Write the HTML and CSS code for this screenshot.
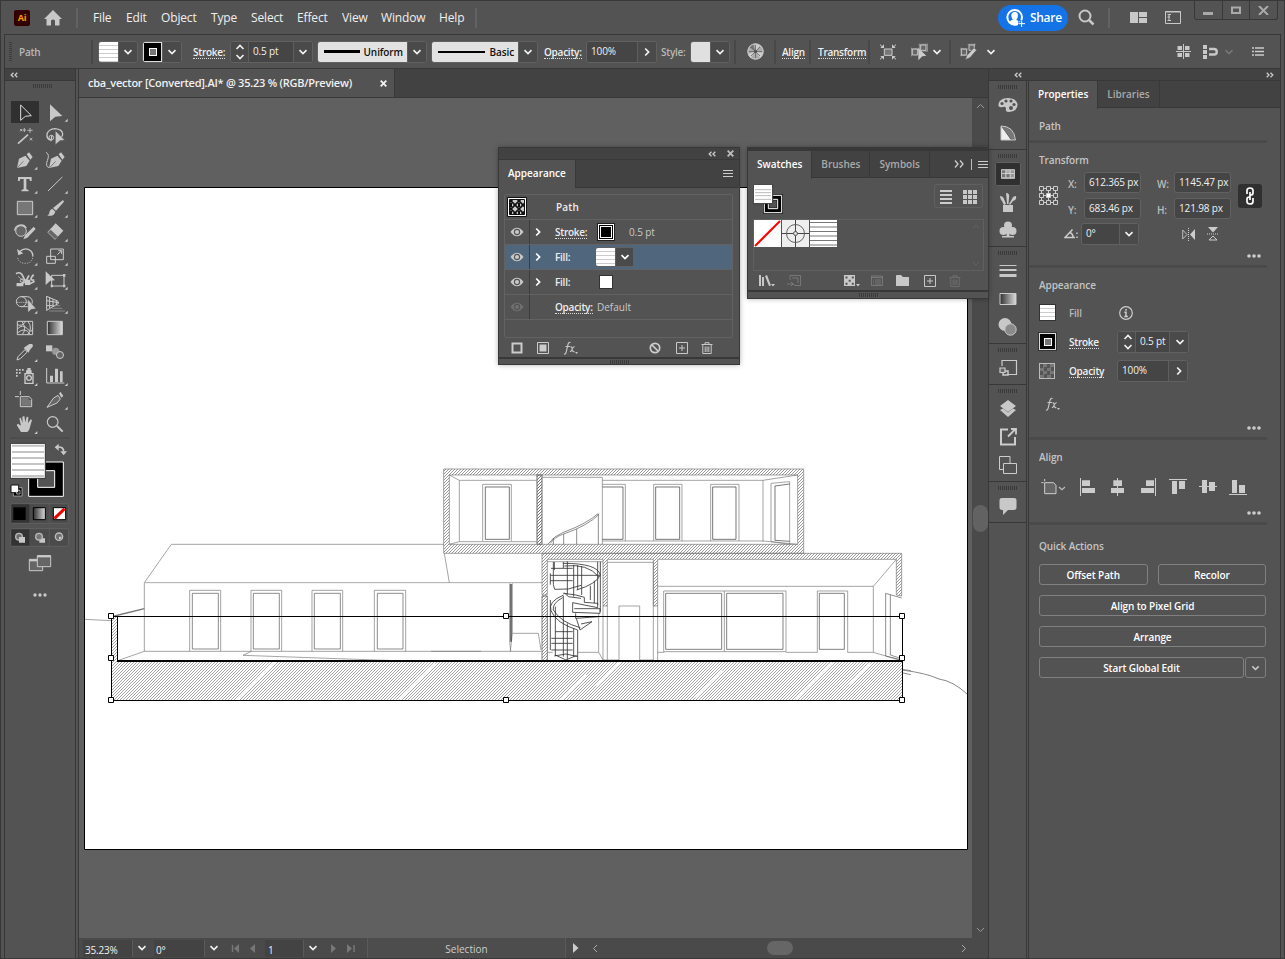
FILE: index.html
```html
<!DOCTYPE html>
<html lang="en">
<head>
<meta charset="utf-8">
<title>cba_vector [Converted].AI</title>
<link rel="stylesheet" href="styles.css">
</head>
<body>
<svg class="defs" width="0" height="0">
  <symbol id="down" viewBox="0 0 10 6"><path d="M1.5 1.2L5 4.6L8.5 1.2" fill="none" stroke="currentColor" stroke-width="1.7"/></symbol>
  <symbol id="right" viewBox="0 0 6 10"><path d="M1.2 1.5L4.6 5L1.2 8.5" fill="none" stroke="currentColor" stroke-width="1.7"/></symbol>
  <symbol id="updown" viewBox="0 0 10 16"><path d="M1.5 5L5 1.5L8.5 5M1.5 11L5 14.5L8.5 11" fill="none" stroke="currentColor" stroke-width="1.6"/></symbol>
  <symbol id="collapse" viewBox="0 0 8 6"><path d="M3.5 .8L1.2 3L3.5 5.2M7.3 .8L5 3L7.3 5.2" fill="none" stroke="currentColor" stroke-width="1.3"/></symbol>
  <symbol id="expand" viewBox="0 0 8 6"><path d="M.7 .8L3 3L.7 5.2M4.5 .8L6.8 3L4.5 5.2" fill="none" stroke="currentColor" stroke-width="1.3"/></symbol>
  <symbol id="dots" viewBox="0 0 14 4"><circle cx="2" cy="2" r="1.8" fill="currentColor"/><circle cx="7" cy="2" r="1.8" fill="currentColor"/><circle cx="12" cy="2" r="1.8" fill="currentColor"/></symbol>
  <symbol id="eye" viewBox="0 0 14 10"><path d="M.5 5Q3.500 .8 7 .8T13.500 5Q10.500 9.200 7 9.200T.5 5Z" fill="currentColor"/><circle cx="7" cy="5" r="2.600" fill="none" stroke="#535353" stroke-width="1.100"/></symbol>
  <symbol id="fx" viewBox="0 0 15 14"><path d="M1 13Q2.500 13.500 3.200 11L5 3.500Q5.500 1 7.500 1.500M2.500 5.500H7M7.500 6Q8.700 5.500 9 7L9.800 10Q10.200 11 11.400 10.400M11.700 5.800Q10.500 5.500 9.500 7.500L8.500 9.500Q8 10.700 6.900 10.400" fill="none" stroke="currentColor" stroke-width="1.100"/><path d="M12 11h3l-1.500 2z" fill="currentColor"/></symbol>
  <symbol id="trash" viewBox="0 0 12 12"><path d="M.5 2.500H11.500M4 2.500V.7H8V2.500M1.800 3V11.500H10.200V3M4.200 4.500V10M6 4.500V10M7.800 4.500V10" fill="none" stroke="currentColor"/></symbol>
  <symbol id="plus" viewBox="0 0 12 12"><path d="M.5 .5H11.500V11.500H.5ZM6 3V9M3 6H9" fill="none" stroke="currentColor"/></symbol>
  <symbol id="lines" viewBox="0 0 10 7"><path d="M0 .5H10M0 3.500H10M0 6.500H10" stroke="currentColor"/></symbol>
</svg>

<div class="window">
  <header class="titlebar">
    <span class="ai">Ai</span>
    <svg class="g" width="18" height="16" viewBox="0 0 18 16"><path d="M9 0L18 9H15.500V15.500H11V10.500Q9 8.300 7 10.500V15.500H2.500V9H0Z"/></svg>
    <i class="sep tall"></i>
    <span>File</span><span>Edit</span><span>Object</span><span>Type</span><span>Select</span><span>Effect</span><span>View</span><span>Window</span><span>Help</span>
    <i class="sep tall"></i>
    <button class="share"><svg width="19" height="18" viewBox="438 24 57 54"><circle cx="464" cy="49" r="22" fill="none" stroke="#fff" stroke-width="6"/><path d="M448 66Q450 57 459 56Q453 49 454 40Q457 32 465 32Q474 34 474 43Q474 51 469 56L475 60V72Q460 76 448 66Z" fill="#fff"/><path d="M485 57V79M474 68H496" stroke="#1473e6" stroke-width="9"/><path d="M485 58V78M475 68H495" stroke="#fff" stroke-width="3"/></svg>Share</button>
    <svg width="17" height="17" viewBox="0 0 17 17" fill="none" stroke="#c8c8c8"><circle cx="7" cy="7" r="5.500" stroke-width="2"/><path d="M11 11L15.500 15.500" stroke-width="2.500"/></svg>
    <i class="sep tall"></i>
    <svg class="g" width="17" height="11" viewBox="0 0 17 11"><path d="M0 0H8V11H0ZM9 0H17V5H9ZM9 6H17V11H9Z"/></svg>
    <svg width="16" height="13" viewBox="0 0 16 13"><path d="M.5 .5H15.500V12.500H.5Z" fill="none" stroke="#c8c8c8"/><path d="M.5 1H15.500M4 3V10M2.500 3.500H6M2.500 9.500H6M2.500 6H5" stroke="#c8c8c8"/></svg>
    <div class="winbtns"><i><svg width="10" height="10"><path d="M0 8.500H10" stroke="#aaa" stroke-width="3"/></svg></i><i><svg width="10" height="8"><path d="M1 1.500H9V7H1Z" fill="none" stroke="#aaa" stroke-width="2"/></svg></i><i><svg width="11" height="9"><path d="M1 0L10 9M10 0L1 9" stroke="#aaa" stroke-width="2"/></svg></i></div>
  </header>

  <div class="control">
    <i class="vgrip"></i><b class="dim">Path</b><i class="sep"></i>
    <div class="combo"><i class="stripes s19"></i><em><svg width="10" height="6"><use href="#down"/></svg></em></div>
    <div class="combo"><i class="strokesw"></i><em><svg width="10" height="6"><use href="#down"/></svg></em></div>
    <b><u>Stroke:</u></b>
    <div class="combo"><em class="spin"><svg width="10" height="16"><use href="#updown"/></svg></em><span class="val v44">0.5 pt</span><em><svg width="10" height="6"><use href="#down"/></svg></em></div>
    <div class="combo"><span class="profile w90"><hr class="h3">Uniform</span><em><svg width="10" height="6"><use href="#down"/></svg></em></div>
    <div class="combo"><span class="profile w86"><hr class="h2">Basic</span><em><svg width="10" height="6"><use href="#down"/></svg></em></div>
    <b><u>Opacity:</u></b>
    <div class="combo"><span class="val v50">100%</span><em><svg width="6" height="10"><use href="#right"/></svg></em></div>
    <b class="dim">Style:</b>
    <div class="combo"><i class="blank"></i><em><svg width="10" height="6"><use href="#down"/></svg></em></div>
    <i class="sep"></i>
    <svg width="17" height="17" viewBox="0 0 17 17"><circle cx="8.500" cy="8.500" r="8" fill="#aaa"/><path d="M8.500 8.500L8 1A8 8 0 0 1 13 2.500ZM8.500 8.500L16 10A8 8 0 0 1 13 15ZM8.500 8.500L4 15A8 8 0 0 1 1 11Z" fill="#ccc"/><path d="M8.500 8.500L2 4A8 8 0 0 1 6 1Z" fill="#777"/><path d="M8.500 8.500V2M8.500 8.500V15M2 8.500H15M4 4L13 13M13 4L4 13" stroke="#666" stroke-width=".8"/><circle cx="8.500" cy="8.500" r="7.700" fill="none" stroke="#c8c8c8"/><circle cx="8.500" cy="8.500" r="1.700" fill="#555"/></svg>
    <i class="sep"></i><b><u>Align</u></b><i class="sep"></i><b><u>Transform</u></b><i class="sep"></i>
    <svg width="18" height="18" viewBox="57 126 54 54"><path d="M73 144H96V163H73Z" fill="#777" stroke="#ccc" stroke-width="3"/><path d="M60 131L70 140M108 131L98 140M60 175L70 166M108 175L98 166" stroke="#ccc" stroke-width="3"/><path d="M61 141H72V130ZM107 141H96V130ZM61 165H72V176ZM107 165H96V176Z" fill="#ccc"/></svg>
    <div class="pair"><svg width="17" height="18" viewBox="152 126 51 54"><path d="M181 132H197V148H181ZM156 144H172V162H156Z" fill="#666" stroke="#c8c8c8" stroke-width="3"/><path d="M177 128V152M201 128V152M153 140V166M175 142V150M178 130H201M178 150H201M153 144H178" stroke="#bbb" stroke-width="2"/><path d="M174 142L198 164L186 166L174 178Z" fill="#ccc"/></svg><svg class="ml" width="10" height="6"><use href="#down"/></svg></div>
    <i class="sep"></i>
    <div class="pair"><svg width="17" height="18" viewBox="300 126 51 54"><path d="M327 132H343V148H327ZM304 144H320V162H304Z" fill="#666" stroke="#c8c8c8" stroke-width="3"/><path d="M323 130H347M301 144H323M301 163H323M304 140V166M343 128V152" stroke="#bbb" stroke-width="2"/><path d="M342 140L350 147L330 170L316 176L320 164Z" fill="#ccc" stroke="#535353" stroke-width="2"/></svg><svg class="ml2" width="10" height="6"><use href="#down"/></svg></div>
    <svg class="g" width="15" height="15" viewBox="0 0 15 15"><path d="M1.500 2H6V6H1.500ZM9 2H13.500V6H9ZM1.500 9H6V13H1.500ZM9 9H13.500V13H9ZM7 0H8V15H7ZM0 7H15V8H0Z"/></svg>
    <div class="pair off"><svg class="g" width="15" height="14" viewBox="0 0 15 14"><path d="M0 0H4V4H0ZM0 5H4V9H0ZM0 10H4V14H0Z"/><path d="M6 4H11A2.500 2.500 0 0 1 11 9.500H6" fill="none" stroke="#c8c8c8" stroke-width="2.400"/></svg><svg class="ml" width="10" height="6"><use href="#down"/></svg></div>
    <svg width="12" height="9"><path d="M3 1H12M3 4.500H12M3 8H12" stroke="#ccc" stroke-width="1.300"/><path d="M0 1H2M0 4.500H2M0 8H2" stroke="#ccc" stroke-width="1.500"/></svg>
  </div>

  <main class="work">
    <aside class="tools">
      <div class="bar"><svg width="8" height="6"><use href="#collapse"/></svg></div>
      <i class="grip"></i>
      <div class="toolgrid">
        <svg class="on" viewBox="30 96 90 72"><path d="M62 111L94 143L76 145L62 157Z" fill="none" stroke="#ddd" stroke-width="3"/></svg>
        <svg viewBox="120 96 90 72"><path d="M150 109L187 144L166 146L150 160ZM203 152V161H194Z"/></svg>
        <svg viewBox="30 168 90 72"><path d="M54 227L84 200" stroke="#c8c8c8" stroke-width="5"/><path d="M60 190L67 183M60 183L67 190M82 187H98M90 180V195M89 210L97 217M97 210L89 217M73 180V192M68 186H78" stroke="#c8c8c8" stroke-width="2.500"/></svg>
        <svg viewBox="120 168 90 72"><path d="M152 220Q156 210 155 202M155 217Q139 214 141 198Q146 183 165 182Q187 184 188 198Q188 204 184 207" fill="none" stroke="#c8c8c8" stroke-width="4"/><circle cx="154" cy="209" r="7" fill="none" stroke="#c8c8c8" stroke-width="3"/><path d="M166 188L194 216L180 218L166 230Z" stroke="#535353" stroke-width="1.500"/></svg>
        <svg viewBox="30 240 90 72"><path d="M51 300L57 272L76 263L89 278L79 294ZM80 259L87 253L98 267L91 275ZM112 296V305H103Z"/><path d="M52 299L70 280" stroke="#535353" stroke-width="2"/></svg>
        <svg viewBox="120 240 90 72"><path d="M147 300L153 272L172 263L185 278L175 294ZM176 259L183 253L194 267L187 275Z"/><path d="M149 299L167 280" stroke="#535353" stroke-width="2"/><path d="M138 253Q150 259 142 278Q135 296 148 299" fill="none" stroke="#c8c8c8" stroke-width="3"/></svg>
        <svg viewBox="30 312 90 72"><path d="M54 327H95V339H90L88 333H79V363L86 367V370H64V367L71 363V333H61L59 339H54ZM112 368V377H103Z"/></svg>
        <svg viewBox="120 312 90 72"><path d="M144 369L187 327" stroke="#c8c8c8" stroke-width="3"/><path d="M203 368V377H194Z"/></svg>
        <svg viewBox="30 384 90 72"><path d="M52 400H98V440H52Z" fill="#777" stroke="#ccc" stroke-width="3"/><path d="M112 440V449H103Z"/></svg>
        <svg viewBox="120 384 90 72"><path d="M189 396L192 401L168 428L159 420ZM157 422L166 431Q162 446 142 443Q149 438 149 430Q151 424 157 422ZM203 440V449H194Z"/></svg>
        <svg viewBox="30 456 90 72"><circle cx="63" cy="489" r="16" fill="#666" stroke="#c8c8c8" stroke-width="3"/><path d="M44 488A19 19 0 0 1 79 480" fill="none" stroke="#c8c8c8" stroke-width="4"/><path d="M101 476L107 483L82 509L70 514L75 502ZM112 512V521H103Z"/></svg>
        <svg viewBox="120 456 90 72"><path d="M167 466L190 488L165 515L142 493ZM203 512V521H194Z"/><path d="M152 485L174 506L165 513L144 493Z" fill="#666"/></svg>
        <svg viewBox="30 528 90 72"><path d="M58 551Q76 536 92 548Q100 556 98 566" fill="none" stroke="#c8c8c8" stroke-width="4"/><path d="M98 570Q94 586 76 586Q57 586 53 570" fill="none" stroke="#c8c8c8" stroke-width="3" stroke-dasharray="3 4"/><path d="M51 543L55 562L70 556ZM112 584V593H103Z"/></svg>
        <svg viewBox="120 528 90 72"><path d="M140 565H166V586H140ZM152 543H190V575H152Z" fill="none" stroke="#ccc" stroke-width="3"/><path d="M172 560L184 549M175 548H185V558" fill="none" stroke="#ccc" stroke-width="3"/><path d="M203 584V593H194Z"/></svg>
        <svg viewBox="30 600 90 72"><path d="M48 617Q62 609 69 625L78 645Q82 653 104 640M50 650Q75 651 87 622M101 620Q84 639 103 636" fill="none" stroke="#c8c8c8" stroke-width="5"/><circle cx="66" cy="638" r="5" fill="#535353" stroke="#ccc" stroke-width="3"/><path d="M54 625L84 650" stroke="#ccc" stroke-width="2"/><path d="M50 645H70V655H50ZM75 635H91V651H75ZM112 656V665H103Z"/></svg>
        <svg viewBox="120 600 90 72"><path d="M155 622H192V654H155Z" fill="none" stroke="#ccc" stroke-width="3"/><path d="M137 610L165 637L151 638L137 651ZM189 618H196V626H189ZM189 650H196V658H189ZM152 650H159V658H152ZM203 656V665H194Z"/></svg>
        <svg viewBox="30 672 90 72"><circle cx="64" cy="701" r="15" fill="none" stroke="#ccc" stroke-width="3"/><path d="M64 686H82A15 15 0 0 1 82 716H64" fill="none" stroke="#ccc" stroke-width="3"/><path d="M52 703H93" stroke="#ccc" stroke-width="3" stroke-dasharray="3 3"/><path d="M83 694L108 722L94 724L84 733Z" stroke="#535353"/><path d="M112 728V737H103Z"/></svg>
        <svg viewBox="120 672 90 72"><path d="M140 684V728M140 685L175 700M140 698L177 704M140 713H168M149 689V720M159 693V715M169 697V712M140 727L176 706" fill="none" stroke="#ccc" stroke-width="3"/><path d="M163 713H180M155 721H187M148 729H195" stroke="#888" stroke-width="3"/><path d="M203 728V737H194Z"/></svg>
        <svg viewBox="30 744 90 72"><path d="M52 760H98V800H52ZM66 760Q82 785 66 800M84 760Q99 780 83 800M52 783Q68 766 82 782T98 781M52 770Q67 777 77 760M52 795Q76 774 91 800" fill="none" stroke="#ccc" stroke-width="3"/></svg>
        <svg viewBox="120 744 90 72"><defs><linearGradient id="gr"><stop offset="0" stop-color="#303030"/><stop offset="1" stop-color="#ddd"/></linearGradient></defs><path d="M142 760H187V800H142Z" fill="url(#gr)" stroke="#ccc" stroke-width="3"/></svg>
        <svg viewBox="30 15 90 72"><path d="M51 75L54 65L75 44L82 51L61 71Z" fill="none" stroke="#ccc" stroke-width="3"/><path d="M71 39L78 34L88 27H97L99 34L89 46L86 53ZM112 72V81H103Z"/></svg>
        <svg viewBox="120 15 90 72"><path d="M138 31H157V49H138Z"/><circle cx="167" cy="49" r="11" fill="#999"/><circle cx="180" cy="60" r="10.500" fill="#666" stroke="#ccc" stroke-width="3"/></svg>
        <svg viewBox="30 87 90 72"><path d="M75 116H99V145H75Z" fill="none" stroke="#ccc" stroke-width="4"/><circle cx="87" cy="129" r="7" fill="none" stroke="#ccc" stroke-width="4"/><path d="M78 106H95V115H78ZM82 99H92V106H82ZM48 102H53V107H48ZM57 102H62V107H57ZM66 102H71V107H66ZM48 111H53V116H48ZM57 111H62V116H57ZM48 120H53V125H48ZM112 144V153H103Z"/></svg>
        <svg viewBox="120 87 90 72"><path d="M140 99V144H193" fill="none" stroke="#ccc" stroke-width="3"/><path d="M150 122H159V141H150ZM165 101H174V141H165ZM180 109H188V141H180ZM203 144V153H194Z"/></svg>
        <svg viewBox="30 159 90 72"><path d="M61 185H88L95 193V215H61ZM45 185H57M61 168V180" fill="none" stroke="#ccc" stroke-width="3"/><path d="M64 188H86V195H93V212H64Z" fill="#777"/></svg>
        <svg viewBox="120 159 90 72"><path d="M141 217L161 189L174 181L181 192L171 204Z" fill="#666" stroke="#ccc" stroke-width="3"/><path d="M177 175L182 171L190 183L184 188ZM203 215V224H194Z"/></svg>
        <svg viewBox="30 231 90 72"><path d="M63 291L50 270L54 266L63 272L58 250L62 248L68 264L67 245L73 243L76 262L80 245L85 246L84 265L92 253L96 255L90 276Q88 288 82 291ZM112 288V297H103Z"/></svg>
        <svg viewBox="120 231 90 72"><circle cx="158" cy="261" r="16" fill="none" stroke="#c8c8c8" stroke-width="3.500"/><path d="M171 273L188 290" stroke="#c8c8c8" stroke-width="6"/></svg>
      </div>
      <svg class="colors" width="60" height="174" viewBox="30 303 180 522">
        <path d="M30 309H210" stroke="#484848" stroke-width="3"/>
        <path d="M86 381H190V484H86Z" fill="#000" stroke="#fff" stroke-width="3"/><path d="M113 407H164V457H113Z" fill="#535353" stroke="#fff" stroke-width="3"/>
        <path d="M31 325H136V430H31Z" fill="#fff" stroke="#333" stroke-width="3"/><path d="M36 332H132M36 351H132M36 369H132M36 387H132M36 405H132M36 423H132" stroke="#c4c4c4" stroke-width="6"/>
        <path d="M174 336Q191 335 191 350" fill="none" stroke="#c8c8c8" stroke-width="5"/><path d="M164 337L176 326V347ZM181 349H201L191 361Z" fill="#c8c8c8"/>
        <path d="M40 458H66V483H40Z" fill="#000" stroke="#ccc" stroke-width="2"/><path d="M33 450H56V473H33Z" fill="#fff" stroke="#111" stroke-width="3"/><path d="M50 466H60V477H50Z" fill="none" stroke="#eee" stroke-width="2"/>
        <rect x="32" y="506" width="174" height="59" rx="6" fill="#4b4b4b" stroke="#606060" stroke-width="3"/><path d="M34 508H88V563H34Z" fill="#333"/><path d="M40 517H77V555H40Z" fill="#000"/><path d="M100 518H136V554H100Z" fill="url(#gr)" stroke="#000" stroke-width="3"/><path d="M160 518H197V554H160Z" fill="#fff" stroke="#000" stroke-width="3"/><path d="M163 551L194 521" stroke="#e00" stroke-width="9"/><path d="M148 506V564" stroke="#606060" stroke-width="2"/>
        <rect x="32" y="581" width="174" height="53" rx="6" fill="#4b4b4b" stroke="#606060" stroke-width="3"/><path d="M34 583H88V632H34Z" fill="#333"/><path d="M148 581V633" stroke="#606060" stroke-width="2"/>
        <g fill="#6e6e6e" stroke="#bbb" stroke-width="4"><circle cx="57" cy="605" r="10"/><circle cx="177" cy="605" r="11"/></g><path d="M57 606H75V623H57ZM118 610H135V623H118ZM177 605H185A8 8 0 0 1 177 613Z" fill="#c8c8c8"/><circle cx="117" cy="605" r="10" fill="#777" stroke="#bbb" stroke-width="4"/>
        <path d="M88 673H128V707H88Z" fill="#666" stroke="#c8c8c8" stroke-width="3"/><path d="M88 676H125" stroke="#ccc" stroke-width="6"/><path d="M112 662H152V695H112Z" fill="#666" stroke="#c8c8c8" stroke-width="3"/><path d="M112 664H152" stroke="#ccc" stroke-width="6"/>
        <g fill="#c8c8c8"><circle cx="105" cy="780" r="5"/><circle cx="120" cy="780" r="5"/><circle cx="135" cy="780" r="5"/></g>
      </svg>
    </aside>

    <section class="document">
      <div class="doctabs"><div class="doctab"><b>cba_vector [Converted].AI* @ 35.23 % (RGB/Preview)</b><svg width="7" height="7"><path d="M.7 .7L6.300 6.300M6.300 .7L.7 6.300" stroke="#eee" stroke-width="1.900"/></svg></div></div>
      <div class="view">
        <svg class="canvas" width="893" height="840" viewBox="78 98 893 840">
          <defs>
            <pattern id="hatch" width="3" height="3" patternUnits="userSpaceOnUse"><path d="M-1 1L1 -1M0 3L3 0M2 4L4 2" stroke="#777" stroke-width=".65"/></pattern>
            <pattern id="hatch3" width="9" height="9" patternUnits="userSpaceOnUse"><path d="M-2 2L2 -2M0 9L9 0M7 11L11 7" stroke="#666" stroke-width="2"/></pattern>
          </defs>
          <path d="M83.500 187.500H966.500V849.500H83.500Z" fill="#fff" stroke="#000"/>
          <g transform="translate(80 535) scale(.33333)" fill="none" stroke="#777" stroke-width="2">
            <path d="M1089 28H271L190 143V349H1200M190 349L110 377M12 253L90 257"/>
            <path d="M190 143H1383" stroke="#aaa" stroke-width="3"/>
            <path d="M100 243L190 221" stroke="#777" stroke-width="4"/>
            <path d="M326 349V166H419V349M510 349V166H602V349M693 349V166H785V349M880 349V166H974V349"/>
            <path d="M334 175H412V342H334ZM517 175H595V342H517ZM700 175H778V342H700ZM889 175H966V342H889Z" stroke="#555"/>
            <path d="M511 349L486 361L970 378" stroke-width="2"/>
          </g>
          <g transform="translate(430 460) scale(.33333)" fill="none" stroke="#777" stroke-width="2">
            <path d="M38 27H1118V280H38ZM55 45V253H1100V45ZM318 45H333V253H318Z" fill="url(#hatch3)" fill-rule="evenodd"/>
            <path d="M318 45H333V253H318Z" fill="url(#hatch3)"/>
            <path d="M333 280H1412V408L1396 405V298H680V438H667V298H529V438H516V298H349V405H333Z" fill="url(#hatch3)"/>
            <path d="M333 408H349V602H333Z" fill="url(#hatch3)" stroke="#444"/>
            <path d="M55 45L85 61H317M85 61V245L55 253M85 245H317M155 243V73H241V243M333 52H514V253M514 73H583V243M668 243V73H753V243M839 243V73H924V243M514 61H996V245M514 243H996L1100 253M996 61L1100 45M1020 245V70L1076 65V253M1020 245L1076 253"/>
            <path d="M163 81H235V238H163ZM514 81H576V238H514M674 81H746V238H674ZM845 81H915V238H845ZM1076 72L1032 78V241L1076 244" stroke="#333"/>
            <path d="M358 250Q370 232 395 223Q470 198 505 162M350 253Q370 227 395 218Q470 190 502 160M367 234V253M398 222V253M437 207V253M502 162V253" stroke="#555"/>
            <path d="M0 574H330M40 280L55 368M236 370V545L239 574M244 370V520L238 574M244 520H322L330 570"/><path d="M240 372V545" stroke="#333" stroke-width="4"/>
            <path d="M349 305H516M349 577H365M440 577H503L516 600H564V438H626V600H667M503 460V577M667 438V600M680 438V602M516 438V602M529 438V600M529 307H667V438M680 379H1327V577H1250M1327 379L1396 298M1327 577L1412 602M680 577H700M1065 577H1159M1159 577V393H1250V577M698 575V393H1065V575H698M880 393V575"/>
            <path d="M704 400H872V568H704ZM887 400H1056V568H887ZM1165 400H1240V568H1165Z" stroke="#444"/>
            <path d="M1412 414L1364 400V588L1412 600M1378 405V585L1412 596M1412 628L1440 632M1412 638L1440 644" stroke="#555"/>
            <g stroke="#333" stroke-width="2.500">
              <path d="M397 310Q500 310 508 345Q496 372 437 390M400 318Q470 310 503 350M360 325H425M358 346H506M358 362H425M370 306V330M367 374L371 388L412 387L450 376M397 306V324M409 304V404M428 315V410M440 315V390M452 318V405M358 340V374M367 306V374M478 377V420M490 362V430M500 305V435M508 305V455"/>
              <path d="M398 405Q350 425 360 452Q375 490 440 510M395 413Q363 430 367 450Q390 488 448 503M358 420V570M373 440V588M397 408V590M409 490V598M428 505V590M440 510V602M361 535H425M361 550H425M361 570H425M370 588L405 582L440 590M373 585L405 600L437 586M373 515H425"/>
              <path d="M397 400L435 405L460 412V427L500 430V443L425 428V457L507 460M434 460V475L504 470M430 446H507V460M436 475L447 510L483 485L450 492M400 398L412 410L450 415"/>
            </g>
          </g>
          <path d="M901 670Q925 673 938 679Q952 681 966 694" fill="none" stroke="#888"/>
          <path d="M110 616H117V661H901V700H110Z" fill="url(#hatch)"/>
          <path d="M235 700L274 661M398 699L434 663M560 700L585 675M596 686L620 661M695 698L722 671M795 700L832 663M848 684L869 663" stroke="#fff" stroke-width="2"/>
          <path d="M110.500 616.500H901.500V700.500H110.500ZM116.500 616V661M116 661H901" fill="none" stroke="#000" stroke-width="1.100" shape-rendering="crispEdges"/>
          <path d="M107.500 613.500h5v5h-5zM502.500 613.500h5v5h-5zM898.500 613.500h5v5h-5zM107.500 655.500h5v5h-5zM898.500 655.500h5v5h-5zM107.500 697.500h5v5h-5zM502.500 697.500h5v5h-5zM898.500 697.500h5v5h-5z" fill="#fff" stroke="#000"/>
        </svg>
        <div class="vscroll"><svg width="9" height="6"><path d="M1 5L4.500 1.500L8 5" fill="none" stroke="#999"/></svg><i></i><svg width="9" height="6"><path d="M1 1L4.500 4.500L8 1" fill="none" stroke="#999"/></svg></div>
      </div>
      <footer class="status">
        <span class="sf">35.23%</span><em><svg width="10" height="6"><use href="#down"/></svg></em>
        <span class="sf sf2">0°</span><em><svg width="10" height="6"><use href="#down"/></svg></em>
        <svg class="nav" width="26" height="9"><path d="M1.500 1V8" stroke="#777" stroke-width="1.500"/><path d="M8 0V9L3 4.500ZM24 0V9L19 4.500Z" fill="#777"/></svg>
        <span class="sf sf3">1</span><em><svg width="10" height="6"><use href="#down"/></svg></em>
        <svg class="nav" width="26" height="9"><path d="M1 0V9L6 4.500ZM17 0V9L22 4.500Z" fill="#777"/><path d="M24 1V8" stroke="#777" stroke-width="1.500"/></svg>
        <span class="mode">Selection</span>
        <svg class="play" width="6" height="10"><path d="M0 0V10L5.500 5Z" fill="#ccc"/></svg>
        <div class="hscroll"><svg width="6" height="9"><path d="M5 1L1.500 4.500L5 8" fill="none" stroke="#aaa"/></svg><i></i><svg width="6" height="9"><path d="M1 1L4.500 4.500L1 8" fill="none" stroke="#aaa"/></svg></div>
      </footer>
    </section>

    <aside class="right">
      <div class="bar rightbar"><svg width="8" height="6"><use href="#collapse"/></svg><svg width="8" height="6"><use href="#expand"/></svg></div>
      <div class="rightcols">
        <nav class="dock">
          <div><i class="grip"></i>
            <svg viewBox="0 0 28 28"><path d="M14 7C8 7 4 10 4.500 15Q6 17 9 16Q12 15 12 18Q11 21 15 21Q24 20 23.500 13Q22 7 14 7Z"/><g fill="#535353"><circle cx="8" cy="12.500" r="1.600"/><circle cx="12" cy="10" r="1.600"/><circle cx="17" cy="10" r="1.600"/><circle cx="20" cy="13.500" r="1.600"/><circle cx="17" cy="17" r="2"/></g></svg>
            <svg viewBox="0 0 28 28"><path d="M7 21V7L17 21Z" fill="#eee"/><path d="M7 7Q19 6 21 21H18Z" fill="#777"/><path d="M7 21V7Q20 7 21.500 21Z" fill="none" stroke="#c8c8c8"/></svg></div>
          <div><i class="grip"></i>
            <svg class="sel" viewBox="0 0 28 28"><path d="M6 8.500H22V19.500H6Z" fill="#ddd"/><path d="M7 9.500H11V13H7ZM12 14H16V18H12ZM7 14H11V18H7Z" fill="#777"/><path d="M12 9.500H16V13H12Z" fill="#aaa"/><path d="M17 9.500H21V13H17ZM17 14H21V18H17Z" fill="#999"/></svg>
            <svg viewBox="0 0 28 28"><path d="M9 17H19V24H9ZM6 8Q9 8 10 11L12 16L10 17L8 13Q6 11 6 8ZM12 5Q16 5 15 10L14.500 16H13L12.500 10ZM22 8Q23 12 19 13L16 17L15 16L18 11Q19 8 22 8Z"/></svg>
            <svg viewBox="0 0 28 28"><circle cx="14" cy="9.500" r="4"/><circle cx="9.500" cy="15" r="4"/><circle cx="18.500" cy="15" r="4"/><path d="M13 13H15L15.500 20H20V21.500H8V20H12.500Z"/></svg></div>
          <div><i class="grip"></i>
            <svg viewBox="0 0 28 28"><path d="M5.500 8H22.500V9H5.500ZM5.500 12H22.500V14H5.500ZM5.500 17H22.500V20H5.500Z"/></svg>
            <svg viewBox="0 0 28 28"><path d="M6 8.500H22V19.500H6Z" fill="url(#gr)" stroke="#ccc"/></svg>
            <svg viewBox="0 0 28 28"><circle cx="11" cy="11.500" r="6.500"/><circle cx="16.500" cy="16.500" r="5.700" fill="#8a8a8a" stroke="#ccc"/></svg></div>
          <div><i class="grip"></i>
            <svg viewBox="0 0 28 28"><path d="M8 12V6.500H22.500V20.500H13" fill="none" stroke="#ccc" stroke-width="1.200"/><path d="M9 17H14V21H9Z" fill="#535353" stroke="#ccc" stroke-width="1.500"/><path d="M6 14H11V18.500H6Z" fill="#666" stroke="#ccc" stroke-width="1.200"/></svg></div>
          <div><i class="grip"></i>
            <svg viewBox="0 0 28 28"><path d="M14 5L22 11L14 17L6 11ZM6 15L9 13.500L14 17.500L19 13.500L22 15L14 22Z"/></svg>
            <svg viewBox="0 0 28 28"><path d="M14 6.500H7V21.500H21V14" fill="none" stroke="#ccc" stroke-width="2"/><path d="M14 13.500L21 6.500M17 6H22V11.500" fill="none" stroke="#ccc" stroke-width="1.800"/></svg>
            <svg viewBox="0 0 28 28"><path d="M9 18.500H5.500V5.500H16V12M9.500 12.500H22.500V22.500H9.500Z" fill="none" stroke="#ccc"/></svg></div>
          <div><i class="grip"></i>
            <svg viewBox="0 0 28 28"><path d="M8 6H20Q22.500 6 22.500 8V15.500Q22.500 18 20 18H14L9 23V18Q5.500 18 5.500 15.500V8Q5.500 6 8 6Z"/></svg></div>
        </nav>
        <section class="props">
          <div class="tabs"><b class="active">Properties</b><b>Libraries</b></div>
          <div class="sec path"><h3>Path</h3></div>
          <div class="sec transform">
            <h3>Transform</h3>
            <div class="xy">
              <svg width="20" height="20" viewBox="0 0 20 20" fill="none" stroke="#ccc"><path d="M.5 .5H4.500V4.500H.5ZM7.500 .5H11.500V4.500H7.500ZM14.500 .5H18.500V4.500H14.500ZM.5 7.500H4.500V11.500H.5ZM14.500 7.500H18.500V11.500H14.500ZM.5 14.500H4.500V18.500H.5ZM7.500 14.500H11.500V18.500H7.500ZM14.500 14.500H18.500V18.500H14.500ZM4.500 2.500H7.500M11.500 2.500H14.500M4.500 16.500H7.500M11.500 16.500H14.500M2.500 4.500V7.500M2.500 11.500V14.500M16.500 4.500V7.500M16.500 11.500V14.500M9.500 4.500V7M9.500 12V14.500M4.500 9.500H7M12 9.500H14.500"/><path d="M7.500 7.500H11.500V11.500H7.500Z" fill="#fff"/></svg>
              <div class="fields"><b>X:</b><span>612.365 px</span><b>W:</b><span>1145.47 px</span><b>Y:</b><span>683.46 px</span><b>H:</b><span>121.98 px</span></div>
              <i class="link"><svg width="10" height="18" viewBox="0 0 10 18" fill="none" stroke="#fff" stroke-width="1.700"><path d="M2 7V3.500Q2 1 5 1T8 3.500V6Q8 8 5.500 8M8 11V14.500Q8 17 5 17T2 14.500V12Q2 10 4.500 10M5 5V13"/></svg></i>
            </div>
            <div class="rot"><svg width="15" height="10"><path d="M8.500 .5L1 8.500H11M6 3.500Q9 5 9 8" fill="none" stroke="#ccc" stroke-width="1.500"/><path d="M13 3.500V5M13 7.500V9" stroke="#ccc" stroke-width="1.400"/></svg>
              <div class="combo"><span class="val v37">0°</span><em><svg width="10" height="6"><use href="#down"/></svg></em></div>
              <svg class="flip" width="14" height="13"><path d="M.7 2V11L5 6.500Z" fill="none" stroke="#bbb"/><path d="M13 1V12L8 6.500Z" fill="#ccc"/><path d="M6.500 0V13" stroke="#ccc" stroke-dasharray="1 1"/></svg>
              <svg class="flip2" width="12" height="14"><path d="M1 0H11L6 5.500Z" fill="#ccc"/><path d="M2 13H10L6 9Z" fill="none" stroke="#ccc"/><path d="M0 7H12" stroke="#ccc" stroke-dasharray="1 1"/></svg></div>
            <svg class="more" width="14" height="4"><use href="#dots"/></svg>
          </div>
          <div class="sec appear">
            <h3>Appearance</h3>
            <div class="ap"><i class="stripes s16"></i><b class="dim">Fill</b><svg width="14" height="14"><circle cx="7" cy="7" r="6.300" fill="none" stroke="#ccc" stroke-width="1.200"/><path d="M7 3V4.700M5.300 6.300H7V10.500M5.200 10.500H8.900" fill="none" stroke="#ccc" stroke-width="1.500"/></svg></div>
            <div class="ap"><i class="strokesw small"></i><b><u>Stroke</u></b><div class="combo"><em class="spin"><svg width="10" height="16"><use href="#updown"/></svg></em><span class="val v33">0.5 pt</span><em><svg width="10" height="6"><use href="#down"/></svg></em></div></div>
            <div class="ap"><i class="checker"></i><b><u>Opacity</u></b><div class="combo"><span class="val v50">100%</span><em><svg width="6" height="10"><use href="#right"/></svg></em></div></div>
            <svg class="fxb" width="15" height="14"><use href="#fx"/></svg>
            <svg class="more" width="14" height="4"><use href="#dots"/></svg>
          </div>
          <div class="sec align">
            <h3>Align</h3>
            <div class="alignrow">
              <svg width="26" height="18" viewBox="188 294 78 54"><path d="M199 308H226L233 316V341H199Z" fill="#666" stroke="#ccc" stroke-width="3"/><path d="M189 308H196M199 297V304" stroke="#ccc" stroke-width="3"/><path d="M242 321L251 329L260 321" fill="none" stroke="#bbb" stroke-width="4"/></svg>
              <svg viewBox="300 294 54 54"><path d="M303 294H306V348H303ZM309 301H333V318H309ZM309 324H348V339H309Z"/></svg>
              <svg viewBox="390 294 54 54"><path d="M414 294H417V348H414ZM403 301H429V318H403ZM396 324H435V339H396Z"/></svg>
              <svg viewBox="480 294 54 54"><path d="M528 294H531V348H528ZM501 301H525V318H501ZM486 324H525V339H486Z"/></svg>
              <svg viewBox="570 294 54 54"><path d="M570 297H624V300H570ZM579 303H594V342H579ZM600 303H618V327H600Z"/></svg>
              <svg viewBox="660 294 54 54"><path d="M660 318H714V321H660ZM669 300H684V339H669ZM690 306H708V333H690Z"/></svg>
              <svg viewBox="750 294 54 54"><path d="M750 342H804V345H750ZM759 300H774V339H759ZM780 315H798V339H780Z"/></svg>
            </div>
            <svg class="more" width="14" height="4"><use href="#dots"/></svg>
          </div>
          <div class="quick"><h3>Quick Actions</h3>
            <div class="btns"><button>Offset Path</button><button>Recolor</button><button class="wide">Align to Pixel Grid</button><button class="wide">Arrange</button><div class="wide split"><button>Start Global Edit</button><button><svg width="9" height="6"><use href="#down"/></svg></button></div></div>
          </div>
        </section>
      </div>
    </aside>
  </main>

  <section class="float appearance">
    <div class="phead"><svg width="8" height="6"><use href="#collapse"/></svg><svg width="7" height="7"><path d="M.7 .7L6.300 6.300M6.300 .7L.7 6.300" stroke="#bbb" stroke-width="1.900"/></svg></div>
    <div class="tabs"><b class="active">Appearance</b><svg width="10" height="7"><use href="#lines"/></svg></div>
    <div class="list">
      <div class="row head"><svg width="20" height="20" viewBox="0 0 20 20"><defs><pattern id="diamond" width="8" height="8" patternUnits="userSpaceOnUse"><path d="M0 0H8V8H0Z" fill="#ccc"/><path d="M0 0L8 8M8 0L0 8" stroke="#111" stroke-width="1.700"/><path d="M3 0H5V2H3ZM3 6H5V8H3Z" fill="#111"/></pattern></defs><path d="M.5 .5H19.500V19.500H.5Z" fill="#fff" stroke="#111"/><path d="M2.500 2.500H17.500V17.500H2.500Z" fill="url(#diamond)" stroke="#111"/></svg><b>Path</b></div>
      <div class="row"><svg width="14" height="10"><use href="#eye"/></svg><svg width="6" height="10"><use href="#right"/></svg><b><u>Stroke:</u></b><i class="blacksw"></i><span class="n">0.5 pt</span></div>
      <div class="row hot"><svg width="14" height="10"><use href="#eye"/></svg><svg width="6" height="10"><use href="#right"/></svg><b>Fill:</b><div class="combo"><i class="stripes s19"></i><em><svg width="10" height="6"><use href="#down"/></svg></em></div></div>
      <div class="row"><svg width="14" height="10"><use href="#eye"/></svg><svg width="6" height="10"><use href="#right"/></svg><b>Fill:</b><i class="whitesw"></i></div>
      <div class="row faint"><svg width="14" height="10"><use href="#eye"/></svg><span></span><b><u>Opacity:</u></b><span class="def">Default</span></div>
    </div>
    <div class="pfoot">
      <svg width="12" height="12"><path d="M1.500 1.500H10.500V10.500H1.500Z" fill="none" stroke="#ccc" stroke-width="2"/></svg>
      <svg width="12" height="12"><path d="M.5 .5H11.500V11.500H.5Z" fill="none" stroke="#ccc"/><path d="M2.500 2.500H9.500V9.500H2.500Z" fill="#ccc"/></svg>
      <svg width="15" height="14"><use href="#fx"/></svg>
      <svg width="12" height="12"><circle cx="6" cy="6" r="4.700" fill="none" stroke="#ccc" stroke-width="1.700"/><path d="M3 3L9 9" stroke="#ccc" stroke-width="1.700"/></svg>
      <svg width="12" height="12"><use href="#plus"/></svg><svg width="12" height="12"><use href="#trash"/></svg>
    </div>
    <div class="pgrip"><i class="grip"></i></div>
  </section>

  <section class="float swatches">
    <div class="tabs"><b class="active">Swatches</b><b>Brushes</b><b>Symbols</b><svg width="10" height="8" viewBox="0 0 10 8"><path d="M1 .5L4 4L1 7.500M6 .5L9 4L6 7.500" fill="none" stroke="#ccc" stroke-width="1.300"/></svg><i class="bar1"></i><svg width="10" height="7"><use href="#lines"/></svg></div>
    <div class="swtop">
      <svg width="30" height="30" viewBox="39 132 90 90"><path d="M70 163H128V221H70Z" fill="#000"/><path d="M73 166H125V218H73ZM85 178H113V206H85Z" fill="none" stroke="#fff" stroke-width="3"/><path d="M88 181H110V203H88Z" fill="#535353"/><path d="M40 133H98V191H40Z" fill="#fff" stroke="#333" stroke-width="3"/><path d="M45 149H93M45 158H93M45 167H93M45 178H93" stroke="#bbb" stroke-width="3"/></svg>
      <div class="views"><svg width="12" height="14"><path d="M0 1H12M0 5H12M0 9H12M0 13H12" stroke="#ccc" stroke-width="2"/></svg><svg width="14" height="14" class="g"><path d="M0 0H4V4H0ZM5 0H9V4H5ZM10 0H14V4H10ZM0 5H4V9H0ZM5 5H9V9H5ZM10 5H14V9H10ZM0 10H4V14H0ZM5 10H9V14H5ZM10 10H14V14H10Z"/></svg></div>
    </div>
    <div class="swlist">
      <svg width="84" height="28"><path d="M0 0H27V27H0Z" fill="#fff"/><path d="M1 26L26 1" stroke="#f00" stroke-width="2"/><path d="M28 0H55V27H28Z" fill="#eee"/><path d="M41.500 0V27M28 13.500H55" stroke="#444"/><circle cx="41.500" cy="13.500" r="9" fill="none" stroke="#666"/><circle cx="41.500" cy="13.500" r="2" fill="#ddd" stroke="#555"/><path d="M56 0H83V27H56Z" fill="#fff"/><path d="M56 2.500H83M56 7H83M56 11.500H83M56 16H83M56 20.500H83M56 25H83" stroke="#777"/></svg>
      <div><svg width="8" height="5"><path d="M1 4L4 1L7 4" fill="none" stroke="#626262"/></svg><svg width="8" height="5"><path d="M1 1L4 4L7 1" fill="none" stroke="#626262"/></svg></div>
    </div>
    <div class="swfoot">
      <svg class="g" width="16" height="12" viewBox="0 0 16 12"><path d="M0 0H2V11H0ZM3 2H5V11H3ZM6 1L8 0L12 10.500L10 11ZM12 9H16L14 11.500Z"/></svg>
      <svg class="faded" width="14" height="12" fill="none" stroke="#888"><path d="M3 5V.5H13.500V10.500H8M5 8L8 10.500M0 9H6M4 7L6 9L4 11M5 3H11V8"/></svg>
      <svg class="g" width="16" height="12" viewBox="0 0 16 12"><path d="M0 0H11V11H0Z"/><path d="M1.500 1.500H3.500V3.500H1.500ZM4.700 4.700H6.700V6.700H4.700ZM1.500 7.800H3.500V9.800H1.500ZM7.800 7.800H9.800V9.800H7.800ZM7.800 1.500H9.800V3.500H7.800Z" fill="#535353"/><path d="M12 9H16L14 11.500Z"/></svg>
      <svg class="faded" width="12" height="12" fill="none" stroke="#888"><path d="M.5 1H11.500V10.500H.5ZM.5 2.500H11.500M2 5H3M4 5H10M2 7H3M4 7H10M2 9H3M4 9H10"/></svg>
      <svg class="g" width="14" height="11" viewBox="0 0 14 11"><path d="M0 1Q0 0 1 0H5L7 2H13V11H0Z"/></svg>
      <svg width="12" height="12"><use href="#plus"/></svg><svg class="faded" width="12" height="12"><use href="#trash"/></svg>
    </div>
    <div class="pgrip"><i class="grip"></i></div>
  </section>
</div>
</body>
</html>
```

FILE: styles.css
```css
* { box-sizing: border-box; }
body { margin: 0; background: #383838; font: 10px/14px "Open Sans", "Noto Sans", sans-serif; color: #f0f0f0; overflow: hidden; }
i, em { font-style: normal; display: block; }
b { font-weight: 600; letter-spacing: -.25px; }
u { text-decoration: none; border-bottom: 1px dotted #ddd; display: inline-block; line-height: 12px; }
svg { display: block; flex: none; }
h3 { margin: 0; font-size: 10px; font-weight: 600; letter-spacing: -.1px; color: #c4c4c4; }
button { font: inherit; color: inherit; padding: 0; }
.defs { position: absolute; }
.g { fill: #c8c8c8; }
.dim { color: #b8b8b8; }

.window { position: relative; width: 1285px; height: 959px; background: #535353; border: 1px solid #383838; display: flex; flex-direction: column; padding: 0 3px; overflow: hidden; }

/* title bar */
.titlebar { height: 33px; flex: none; display: grid; align-items: center; padding-left: 10px; grid-template-columns: 30px 32px 17px 33px 35px 50px 40px 46px 45px 39px 58px 36px 523px 80px 30px 22px 35px 29px auto; font-size: 12px; letter-spacing: -.15px; white-space: nowrap; }
.ai { width: 16px; height: 16px; background: #330000; border-radius: 2px; color: #ff9a00; font-size: 9px; font-weight: 700; text-align: center; line-height: 16px; }
.sep { width: 2px; height: 24px; background: #484848; }
.sep.tall { height: 20px; background: #626262; }
.share { width: 70px; height: 26px; border: 0; border-radius: 13px; background: #1473e6; color: #fff; display: flex; align-items: center; gap: 5px; padding-left: 8px; font-weight: 600; letter-spacing: -.3px; }
.winbtns { display: flex; align-self: start; width: 84px; height: 19px; border: 1px solid #383838; border-top: 0; border-radius: 0 0 3px 3px; }
.winbtns i { flex: 1; display: grid; place-items: center; }
.winbtns i + i { border-left: 1px solid #383838; }

/* control bar */
.control { height: 35px; flex: none; border: 1px solid #383838; display: grid; align-items: center; padding-left: 4px; grid-template-columns: 10px 72px 7px 44px 51px 37px 87px 114px 113px 42px 75px 29px 44px 13px 27px 8px 27px 9px 50px 11px 32px 38px 11px 216px 27px 49px auto; white-space: nowrap; }
.vgrip { width: 3px; height: 20px; background: repeating-linear-gradient(#3c3c3c 0 1px, transparent 1px 2px); }
.combo { display: flex; height: 22px; width: max-content; border: 1px solid #616161; border-radius: 3px; background: #454545; overflow: hidden; align-items: stretch; }
.combo em { width: 19px; display: grid; place-items: center; background: #4a4a4a; border-left: 1px solid #5e5e5e; }
.combo em.spin { border: 0; border-right: 1px solid #5e5e5e; width: 18px; }
.val { padding-left: 4px; line-height: 19px; letter-spacing: -.15px; }
.v44 { width: 44px; } .v50 { width: 50px; } .v37 { width: 37px; } .v33 { width: 33px; }
.stripes { background: repeating-linear-gradient(#fff 0 3px, #ccc 3px 4px); }
.s19 { width: 19px; }
.s16 { width: 17px; height: 17px; border: 1px solid #fff; outline: 1px solid #333; outline-offset: -1px; }
.strokesw { width: 19px; background: #000; border: 1px solid #ddd; display: grid; place-items: center; }
.strokesw::after { content: ""; width: 6px; height: 6px; border: 1px solid #fff; background: #777; outline: 0; }
.strokesw.small { height: 17px; width: 17px; outline: 1px solid #333; }
.profile { background: #e2e2e2; color: #111; display: flex; align-items: center; justify-content: flex-end; gap: 4px; padding-right: 4px; font-weight: 600; letter-spacing: -.1px; line-height: 22px; }
.profile hr { flex: 1; border: 0; background: #000; margin: 0 0 0 6px; }
.h3 { height: 3px; } .h2 { height: 2px; }
.w90 { width: 89px; } .w86 { width: 86px; }
.blank { width: 19px; background: #e0e0e0; }
.pair { display: flex; align-items: center; }
.ml { margin-left: 4px; } .ml2 { margin-left: 9px; }
.off .ml { color: #777; margin-left: 6px; }

/* work area */
.work { flex: 1; display: grid; grid-template-columns: 72px 2px 911px 292px; min-height: 0; height: 886px; padding-bottom: 3px; }
.tools { border: solid #383838; border-width: 0 1px; display: flex; flex-direction: column; align-items: center; }
.document { grid-column: 3; border: solid #383838; border-width: 0 1px 1px; display: flex; flex-direction: column; min-width: 0; }
.bar { height: 12px; width: 100%; flex: none; background: #424242; border-bottom: 1px solid #383838; padding: 3px 0 0 5px; color: #ccc; }
.grip { width: 19px; height: 4px; background: repeating-linear-gradient(90deg, #3a3a3a 0 1px, transparent 1px 2px); }
.tools > .grip { margin: 3px 0 12px 5px; }
.toolgrid { display: grid; grid-template-columns: 30px 30px; grid-auto-rows: 24px; margin-left: 0; }
.toolgrid svg { width: 30px; height: 24px; fill: #c8c8c8; }
.toolgrid .on { background: linear-gradient(#303030, #303030) 1px 1px / 28px 22px no-repeat; }
.doctabs { height: 29px; flex: none; background: #424242; border-bottom: 1px solid #383838; }
.doctab { width: 316px; height: 28px; background: #535353; border-right: 1px solid #383838; display: flex; align-items: center; justify-content: space-between; padding: 0 7px 0 9px; font-size: 11px; white-space: nowrap; }
.view { display: flex; height: 840px; }
.canvas { background: #606060; }
.vscroll { width: 16px; background: #4a4a4a; display: flex; flex-direction: column; align-items: center; justify-content: space-between; padding: 5px 0; }
.vscroll i { width: 15px; height: 27px; border-radius: 8px; background: #626262; margin-top: 0; }
.status { flex: 1; display: flex; align-items: center; background: #4a4a4a; padding-left: 4px; min-height: 0; overflow: hidden; }
.sf { width: 49px; padding-left: 2px; background: #434343; line-height: 20px; height: 17px; letter-spacing: -.2px; }
.sf2 { width: 50px; margin-left: 4px; } .sf3 { width: 38px; padding-left: 3px; }
.status em { width: 18px; height: 17px; display: grid; place-items: center; background: #4a4a4a; border-left: 1px solid #5a5a5a; }
.status .nav { margin: 0 8px 0 9px; }
.status .nav + .mode { margin-left: 3px; }
.mode { width: 199px; padding-top: 2px; text-align: center; color: #ccc; border: solid #5a5a5a; border-width: 0 1px; background: #4d4d4d; line-height: 18px; }
.play { margin: 0 13px 0 7px; }
.hscroll { flex: 1; display: flex; align-items: center; justify-content: space-between; padding-right: 21px; }
.hscroll i { width: 26px; height: 14px; border-radius: 7px; background: #666; }

/* right side */
.right { border-right: 1px solid #383838; display: flex; flex-direction: column; }
.rightbar { display: flex; justify-content: space-between; padding: 3px 6px 0 25px; }
.rightcols { flex: 1; display: grid; grid-template-columns: 38px 1fr; }
.dock { border-right: 1px solid #383838; padding-top: 0; }
.dock > div { border-bottom: 1px solid #383838; padding: 4px 5px 2px; }
.dock .grip { margin: 0 0 2px 4px; }
.dock svg { width: 28px; height: 28px; fill: #c8c8c8; }
.dock .sel { background: #303030; outline: 1px solid #606060; outline-offset: -3px; border: 2px solid #535353; border-radius: 4px; padding: 0; width: 30px; height: 28px; margin-left: -1px; }
.props { border-left: 1px solid #383838; margin-left: 1px; min-width: 0; }
.tabs { display: flex; height: 27px; background: #424242; border-bottom: 1px solid #383838; white-space: nowrap; }
.tabs b { padding: 6px 9px 0; color: #aaa; border-right: 1px solid #383838; letter-spacing: 0; }
.tabs .active { background: #535353; color: #fff; height: 28px; }
.sec { border-bottom: 3px solid #4a4a4a; margin-right: 13px; padding-left: 10px; }
.path { height: 35px; padding-top: 11px; }
.transform { height: 125px; padding-top: 10px; }
.xy { display: grid; grid-template-columns: 29px 172px 24px; align-items: center; padding-top: 5px; }
.fields { display: grid; grid-template-columns: 16px 57px 16px 17px 57px; row-gap: 5px; align-items: center; }
.fields b { color: #bbb; padding-top: 2px; }
.fields b:nth-of-type(even) { grid-column: 4; }
.fields span { height: 21px; border: 1px solid #616161; border-radius: 3px; background: #454545; line-height: 18px; padding-left: 4px; letter-spacing: -.15px; white-space: nowrap; }
.link { width: 24px; height: 24px; margin-left: -2px; border-radius: 3px; background: #303030; display: grid; place-items: center; }
.rot { display: flex; align-items: center; padding: 4px 0 0 25px; }
.rot .combo { margin-left: 2px; }
.rot .flip { margin-left: 43px; } .rot .flip2 { margin-left: 11px; }
.more { margin: 9px 6px 0 auto; color: #ccc; }
.appear { height: 172px; padding-top: 10px; }
.appear h3 { margin-bottom: 6px; }
.ap { height: 29px; display: grid; grid-template-columns: 30px 48px auto; align-items: center; }
.ap svg:last-child { margin-left: 2px; }
.checker { width: 16px; height: 16px; border: 1px solid #bbb; background: repeating-conic-gradient(#777 0 25%, #555 0 50%) 0 0 / 7px 7px; }
.fxb { margin: 12px 0 0 6px; color: #c8c8c8; }
.appear .more { margin-top: 15px; }
.align { height: 85px; padding-top: 10px; }
.alignrow { display: flex; gap: 12px; padding: 14px 0 0 2px; }
.alignrow svg { height: 18px; fill: #ccc; }
.alignrow svg + svg { width: 18px; }
.align .more { margin-top: 15px; }
.quick { padding: 14px 14px 0 10px; }
.btns { display: grid; grid-template-columns: 1fr 1fr; gap: 10px; padding-top: 11px; }
.btns button { height: 21px; background: #535353; border: 1px solid #808080; border-radius: 3px; font-weight: 600; color: #fff; letter-spacing: -.1px; }
.wide { grid-column: 1 / 3; }
.split { display: grid; grid-template-columns: 205px 21px; gap: 1px; }
.split svg { margin: auto; color: #ccc; }

/* floating panels */
.float { position: absolute; background: #535353; border: 1px solid #383838; box-shadow: 0 0 5px rgba(0,0,0,.3); }
.phead { height: 12px; background: #424242; border-bottom: 1px solid #383838; display: flex; align-items: center; justify-content: flex-end; gap: 11px; padding-right: 5px; color: #ccc; }
.float .tabs svg { color: #ccc; }
.float .tabs b { padding-top: 6px; }
.appearance { left: 497px; top: 146px; width: 242px; height: 218px; }
.appearance .tabs { height: 28px; }
.appearance .tabs svg { margin: 10px 6px 0 auto; }
.list { margin: 6px 6px 0 5px; height: 144px; border: 1px solid #626262; border-radius: 2px; }
.row { height: 25px; border-bottom: 1px solid #626262; display: grid; grid-template-columns: 24px 25px auto; align-items: center; color: #c8c8c8; grid-template-columns: 24px 25px 40px auto 1fr; background: linear-gradient(#3b3b3b, #3b3b3b) 24px 0 / 1px 100% no-repeat; }
.row > svg:first-child { margin-left: 5px; }
.row > svg:nth-child(2) { margin-left: 6px; color: #fff; }
.row b { color: #eee; margin-left: 1px; white-space: nowrap; }
.row.head { background: none; grid-template-columns: 50px auto; }
.row.head > svg { margin-left: 2px; }
.row.head b { letter-spacing: .2px; }
.row.hot { background-color: #50667d; }
.row .n { margin-left: 14px; letter-spacing: -.1px; }
.row .def { margin-left: 3px; white-space: nowrap; }
.row.faint > svg { color: #707070; }
.blacksw { width: 18px; height: 18px; margin-left: 3px; background: #000; border: 1px solid #222; box-shadow: inset 0 0 0 1px #fff, inset 0 0 0 2px #000, inset 0 0 0 3px #fff; }
.whitesw { width: 14px; height: 14px; margin-left: 5px; background: #fff; border: 1px solid #333; }
.row .combo { height: 20px; margin-left: 1px; }
.row .combo em { width: 18px; color: #fff; }
.pfoot { height: 19px; display: grid; grid-template-columns: 26px 26px 86px 27px 25px auto; align-items: center; padding-left: 12px; color: #c8c8c8; }
.pgrip { border-top: 2px solid #383838; height: 8px; display: grid; place-items: start center; padding-top: 1px; }
.swatches { left: 746px; top: 146px; width: 242px; height: 152px; border-top-width: 4px; }
.swatches .tabs svg { margin: 9px 0 0 24px; }
.swatches .tabs .bar1 { width: 1px; height: 11px; background: #bbb; margin: 8px 0 0 7px; }
.swatches .tabs .bar1 + svg { margin: 10px 0 0 7px; }
.swtop { display: flex; justify-content: space-between; padding: 6px 5px 0; }
.views { display: flex; width: 49px; height: 24px; border: 1px solid #606060; border-radius: 2px; }
.views svg { margin: 5px auto 0; }
.views svg + svg { border-left: 0; }
.swlist { height: 52px; margin: 5px 4px 0 5px; border: 1px solid #606060; display: flex; justify-content: space-between; padding-right: 2px; }
.swlist div { display: flex; flex-direction: column; justify-content: space-between; padding: 4px 1px; }
.swfoot { height: 19px; display: grid; grid-template-columns: 28px 57px 27px 25px 28px 25px auto; align-items: center; padding-left: 11px; color: #c8c8c8; }
.faded { color: #777; stroke-opacity: .7; }
```
